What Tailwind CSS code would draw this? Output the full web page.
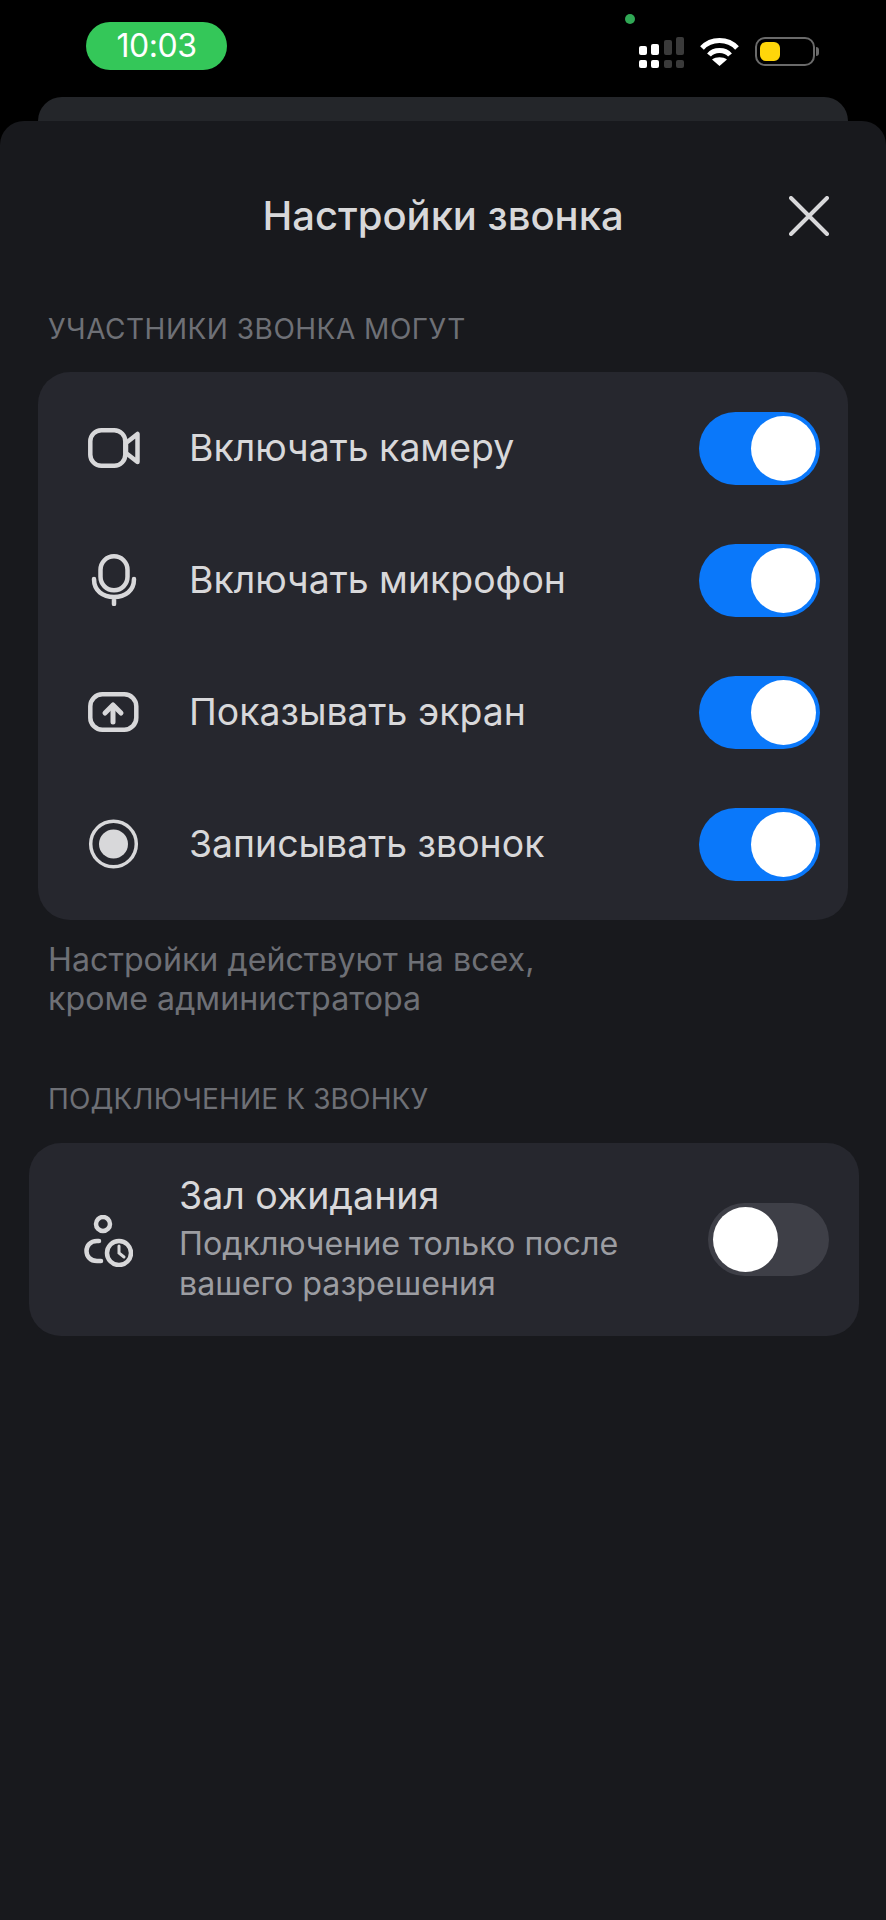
<!DOCTYPE html>
<html lang="ru">
<head>
  <meta charset="UTF-8" />
  <meta name="viewport" content="width=device-width, initial-scale=1.0" />
  <title>Настройки звонка</title>
  <script src="https://cdn.jsdelivr.net/npm/@tailwindcss/browser@4"></script>
</head>
<body class="bg-black font-['Inter',sans-serif] text-[#d8d8da]">
  <div class="relative h-[1920px] w-[886px] overflow-hidden">
    <!-- Status bar -->
    <header class="flex h-[97px] items-start justify-between pl-[86px] pr-[67px]">
      <div class="mt-[22px] flex h-[48px] w-[141px] items-center justify-center rounded-[24px] bg-[#34c759] text-[32px] tracking-[-0.5px] text-white">10:03</div>
      <div class="relative mt-[37px] flex items-start gap-[16px]">
        <span class="absolute left-[-14px] top-[-23px] h-[10px] w-[10px] rounded-full bg-[#30a855]"></span>
        <svg width="45" height="31" viewBox="0 0 45 31">
          <rect x="0" y="9" width="8" height="9" rx="2" fill="#fff" />
          <rect x="0" y="23" width="8" height="8" rx="2" fill="#fff" />
          <rect x="12" y="7" width="8" height="11" rx="2" fill="#fff" />
          <rect x="12" y="23" width="8" height="8" rx="2" fill="#fff" />
          <rect x="25" y="3" width="8" height="15" rx="2" fill="#3a3a3a" />
          <rect x="25" y="23" width="8" height="8" rx="2" fill="#3a3a3a" />
          <rect x="37" y="0" width="8" height="18" rx="2" fill="#3a3a3a" />
          <rect x="37" y="23" width="8" height="8" rx="2" fill="#3a3a3a" />
        </svg>
        <svg width="39" height="29" viewBox="0 0 39 29" fill="none" stroke="#fff" stroke-width="5">
          <path d="M2 11C11 1 28 1 37 11" />
          <path d="M9 18C14 12 25 12 30 18" />
          <path d="M19.500 29L12 22.500C16 19.500 23 19.500 27 22.500Z" fill="#fff" stroke="none" />
        </svg>
        <div class="flex items-center">
          <div class="h-[29px] w-[60px] rounded-[10px] border-2 border-[#6a6a6a] p-[3px]">
            <div class="h-full w-[20px] rounded-[6px] bg-[#ffd60a]"></div>
          </div>
          <span class="ml-[1px] h-[9px] w-[3px] rounded-r-full bg-[#6a6a6a]"></span>
        </div>
      </div>
    </header>

    <!-- Card behind the sheet -->
    <div class="mx-[38px] h-[60px] rounded-t-[24px] bg-[#24262a]"></div>

    <!-- Sheet -->
    <section class="absolute inset-x-0 bottom-0 top-[121px] rounded-t-[24px] bg-[#18191d]">
      <div class="relative flex h-[191px] items-center justify-center pb-[1px]">
        <h1 class="text-[40px] font-medium leading-none">Настройки звонка</h1>
        <svg class="absolute left-[789px] top-[75px]" width="40" height="40" viewBox="0 0 40 40" fill="none" stroke="#d8d8da" stroke-width="4" stroke-linecap="round">
          <path d="M2 2L38 38M38 2L2 38" />
        </svg>
      </div>

      <h2 class="px-[48px] text-[28px] leading-[34px] tracking-[0.5px] text-[#6e7076]">УЧАСТНИКИ ЗВОНКА МОГУТ</h2>

      <div class="mx-[38px] mt-[26px] rounded-[32px] bg-[#26272e] py-[10px]">
        <div class="flex h-[132px] items-center pl-[50px] pr-[28px]">
          <svg width="52" height="40" viewBox="0 0 52 40" fill="none" stroke="#d8d8da" stroke-width="4.500" stroke-linejoin="round">
            <rect x="2.300" y="2.300" width="35" height="35.400" rx="11" />
            <path d="M49.500 6V34L38 25V15Z" />
          </svg>
          <span class="ml-[49px] flex-1 text-[37.400px]">Включать камеру</span>
          <div class="relative h-[73px] w-[121px] rounded-full bg-[#0a78fa]">
            <span class="absolute right-[4px] top-[4px] h-[65px] w-[65px] rounded-full bg-white"></span>
          </div>
        </div>
        <div class="flex h-[132px] items-center pl-[50px] pr-[28px]">
          <svg width="52" height="52" viewBox="0 0 52 52" fill="none" stroke="#d8d8da" stroke-width="4.500" stroke-linecap="round">
            <rect x="12.500" y="2.300" width="27" height="34" rx="13.500" />
            <path d="M6 25C6 37 15 43 26 43C37 43 46 37 46 25M26 43V50" />
          </svg>
          <span class="ml-[49px] flex-1 text-[37.400px]">Включать микрофон</span>
          <div class="relative h-[73px] w-[121px] rounded-full bg-[#0a78fa]">
            <span class="absolute right-[4px] top-[4px] h-[65px] w-[65px] rounded-full bg-white"></span>
          </div>
        </div>
        <div class="flex h-[132px] items-center pl-[50px] pr-[28px]">
          <svg width="52" height="40" viewBox="0 0 52 40" fill="none" stroke="#d8d8da" stroke-width="4.500" stroke-linecap="round" stroke-linejoin="round">
            <rect x="2.300" y="2.300" width="46" height="35.400" rx="12" />
            <path d="M25 30V14" stroke-width="5" />
            <path d="M17 21L25 13L33 21" stroke-width="5" />
          </svg>
          <span class="ml-[49px] flex-1 text-[37.400px]">Показывать экран</span>
          <div class="relative h-[73px] w-[121px] rounded-full bg-[#0a78fa]">
            <span class="absolute right-[4px] top-[4px] h-[65px] w-[65px] rounded-full bg-white"></span>
          </div>
        </div>
        <div class="flex h-[132px] items-center pl-[50px] pr-[28px]">
          <svg width="52" height="50" viewBox="0 0 52 50" fill="none">
            <circle cx="25.500" cy="25" r="22.800" stroke="#d8d8da" stroke-width="3.500" />
            <circle cx="25.500" cy="25" r="14.500" fill="#d8d8da" />
          </svg>
          <span class="ml-[49px] flex-1 text-[37.400px]">Записывать звонок</span>
          <div class="relative h-[73px] w-[121px] rounded-full bg-[#0a78fa]">
            <span class="absolute right-[4px] top-[4px] h-[65px] w-[65px] rounded-full bg-white"></span>
          </div>
        </div>
      </div>

      <p class="mt-[21px] px-[48px] text-[32.200px] leading-[38.500px] text-[#6e7076]">Настройки действуют на всех,<br />кроме администратора</p>

      <h2 class="mt-[64px] px-[48px] text-[28px] leading-[34px] tracking-[0.15px] text-[#6e7076]">ПОДКЛЮЧЕНИЕ К ЗВОНКУ</h2>

      <div class="ml-[29px] mr-[27px] mt-[27px] flex h-[193px] items-center rounded-[32px] bg-[#26272e] pl-[55px] pr-[30px]">
        <svg class="mt-[3px] shrink-0" width="49" height="52" viewBox="0 0 49 52" fill="none" stroke="#d8d8da" stroke-width="4.500" stroke-linecap="round">
          <circle cx="19" cy="9" r="7" />
          <path d="M15 26H13C6 26 2.500 31 2.500 36C2.500 41 6 46 13 46H17" />
          <circle cx="35" cy="38" r="12" />
          <path d="M35 31V38L40 42" stroke-width="3" />
        </svg>
        <div class="ml-[46px] flex-1">
          <p class="text-[37.500px] leading-[42px]">Зал ожидания</p>
          <p class="mt-[7px] text-[32.200px] leading-[40px] text-[#9c9da2]">Подключение только после<br />вашего разрешения</p>
        </div>
        <div class="relative h-[73px] w-[121px] rounded-full bg-[#3e3f47]">
          <span class="absolute left-[5px] top-[4px] h-[65px] w-[65px] rounded-full bg-white"></span>
        </div>
      </div>
    </section>
  </div>
</body>
</html>
